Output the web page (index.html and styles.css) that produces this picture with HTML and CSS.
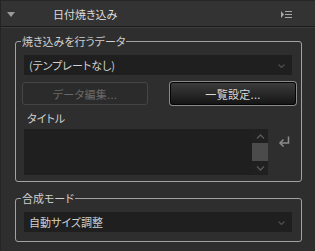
FILE: index.html
```html
<!DOCTYPE html>
<html lang="ja">
<head>
    <meta charset="UTF-8">
    <title>日付焼き込み</title>
    <link rel="stylesheet" href="styles.css">
</head>
<body>

<div class="panel">
    <div class="panel-head">
        <svg class="caret" width="8" height="5" viewBox="0 0 8 5"><path d="M0 0 H8 L4 5 Z" fill="#9a9a9a"/></svg>
        <span class="panel-title">日付焼き込み</span>
        <svg class="menu-icon" width="12" height="7" viewBox="0 0 12 7">
            <path d="M0 0 L3 3.5 L0 7 Z" fill="#a8a8a8"/>
            <path d="M4 0.5 H11 M4 3.5 H11 M4 6.5 H11" stroke="#a8a8a8" stroke-width="1"/>
        </svg>
    </div>

    <div class="panel-body">
        <fieldset class="group">
            <legend>焼き込みを行うデータ</legend>
            <div class="select">
                <span>(テンプレートなし)</span>
                <svg class="chev" width="7" height="4" viewBox="0 0 7 4"><path d="M0.5 0.5 L3.5 3.5 L6.5 0.5" fill="none" stroke="#4e4e4e" stroke-width="1.2"/></svg>
            </div>
            <div class="btn-row">
                <button class="btn" disabled>データ編集...</button>
                <button class="btn btn-dark">一覧設定...</button>
            </div>
            <div class="field-label">タイトル</div>
            <div class="title-row">
                <div class="textarea">
                    <div class="scrollbar">
                        <svg width="9" height="5" viewBox="0 0 9 5"><path d="M1 4.5 L4.5 1 L8 4.5" fill="none" stroke="#5a5a5a" stroke-width="1.3"/></svg>
                        <div class="thumb"></div>
                        <svg width="9" height="5" viewBox="0 0 9 5"><path d="M1 0.5 L4.5 4 L8 0.5" fill="none" stroke="#5a5a5a" stroke-width="1.3"/></svg>
                    </div>
                </div>
                <svg class="return-icon" width="12" height="12" viewBox="0 0 12 12">
                    <path d="M10.5 0.5 V7 H2.5" fill="none" stroke="#8c8c8c" stroke-width="1.5"/>
                    <path d="M5.5 3.5 L2 7 L5.5 10.5" fill="none" stroke="#8c8c8c" stroke-width="1.5"/>
                </svg>
            </div>
        </fieldset>

        <fieldset class="group group-mode">
            <legend>合成モード</legend>
            <div class="select">
                <span>自動サイズ調整</span>
                <svg class="chev" width="7" height="4" viewBox="0 0 7 4"><path d="M0.5 0.5 L3.5 3.5 L6.5 0.5" fill="none" stroke="#4e4e4e" stroke-width="1.2"/></svg>
            </div>
        </fieldset>
    </div>
</div>

</body>
</html>
```

FILE: styles.css
```css
:root {
    --bg: #2e2e2e;
    --head-bg: #333333;
    --field-bg: #1f1f1f;
    --line: #a2a2a2;
    --text: #d2d2d2;
}
body {
    margin: 0;
    background-color: var(--bg);
    font-family: "Noto Sans CJK JP", "Noto Sans", sans-serif;
    font-size: 11px;
    font-feature-settings: "palt";
    color: var(--text);
}
.panel {
    width: 315px;
    height: 251px;
    box-sizing: border-box;
    border-left: 1px solid #242424;
    overflow: hidden;
}

/* cabecera */
.panel-head {
    display: flex;
    align-items: center;
    background-color: var(--head-bg);
    border-top: 1px solid #262626;
    border-bottom: 1px solid #1b1b1b;
    box-shadow: 0 1px 0 #3d3d3d;
    height: 25px;
    padding: 0 22px 0 6px;
}
.caret { margin-top: 2px; }
.panel-title {
    margin-left: 38px;
    flex: 1;
    color: #dcdcdc;
}
.menu-icon { margin-top: 1px; }

.panel-body { padding-top: 7px; }

/* grupos */
.group {
    margin: 0 13px 0 14px;
    padding: 7px 9px 6px 8px;
    border: 1px solid var(--line);
    border-radius: 3px;
    min-width: 0;
}
.group legend {
    padding: 0 1px;
    margin-left: -3px;
    line-height: 14px;
    color: #cfcfcf;
}
.group-mode {
    margin-top: 9px;
    padding-bottom: 9px;
}

.select {
    height: 20px;
    display: flex;
    align-items: center;
    justify-content: space-between;
    padding: 0 7px 0 5px;
    background-color: var(--field-bg);
    color: #d0d0d0;
}
.chev { margin-top: 1px; }

.btn-row {
    display: grid;
    grid-template-columns: 126px 126px;
    justify-content: space-between;
    margin: 7px -4px 0 -2px;
}
.btn {
    height: 23px;
    border-radius: 3px;
    font-family: inherit;
    font-size: 11px;
    font-feature-settings: "palt";
    letter-spacing: 0.3px;
    padding: 0;
}
.btn[disabled] {
    background-color: #2b2b2b;
    border: 1px solid #454545;
    color: #696969;
}
.btn-dark {
    background: linear-gradient(#3c3c3c, #151515);
    border: 1px solid #050505;
    box-shadow: 0 0 0 1px #8a8a8a;
    color: #d8d8d8;
}

.field-label {
    margin-top: 5px;
    padding-left: 3px;
    line-height: 16px;
}

.title-row {
    display: flex;
    align-items: flex-start;
    margin-top: 3px;
}
.textarea {
    width: 244px;
    height: 46px;
    background-color: var(--field-bg);
    display: flex;
    justify-content: flex-end;
}
.scrollbar {
    width: 16px;
    height: 45px;
    background-color: #202020;
    display: flex;
    flex-direction: column;
    align-items: center;
}
.scrollbar svg { margin: 5px 0 4px; }
.scrollbar svg:last-child { margin: 5px 0 0; }
.thumb {
    width: 16px;
    height: 18px;
    background-color: #4b4b4b;
}
.return-icon { margin: 7px 0 0 10px; }
```
